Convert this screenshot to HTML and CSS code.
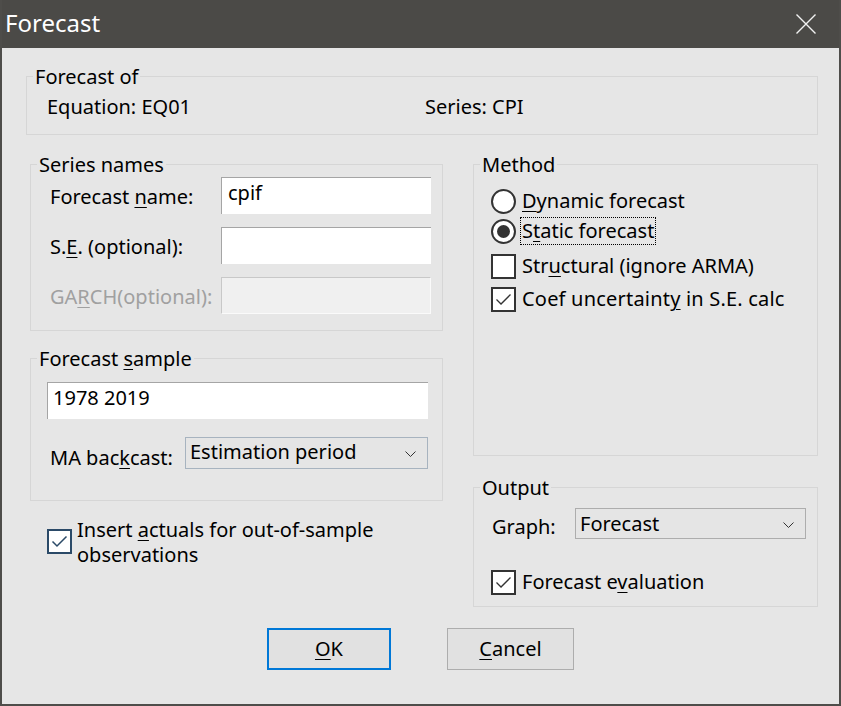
FILE: index.html
```html
<!DOCTYPE html>
<html>
<head>
<meta charset="utf-8">
<link rel="stylesheet" href="styles.css">
</head>
<body>
<div class="window">
  <div class="titlebar">
    <span class="title">Forecast</span>
    <svg class="close" width="20" height="20" viewBox="0 0 20 20"><path d="M0.5 0.5 L19.5 19.5 M19.5 0.5 L0.5 19.5" stroke="#f2f2f2" stroke-width="1.4" fill="none"/></svg>
  </div>
  <div class="client">
    <fieldset class="group g-of">
      <legend>Forecast of</legend>
      <div class="gbody of-row"><span class="of-eq">Equation: EQ01</span><span>Series: CPI</span></div>
    </fieldset>

    <div class="cols">
      <div class="col-left">
        <fieldset class="group g-names">
          <legend>Series names</legend>
          <div class="gbody name-grid">
            <span class="lbl">Forecast <u>n</u>ame:</span><div class="edit">cpif</div>
            <span class="lbl">S.<u>E</u>. (optional):</span><div class="edit"></div>
            <span class="lbl disabled">GA<u>R</u>CH(optional):</span><div class="edit edit-disabled"></div>
          </div>
        </fieldset>

        <fieldset class="group g-sample">
          <legend>Forecast <u>s</u>ample</legend>
          <div class="gbody">
            <div class="edit edit-sample">1978 2019</div>
            <div class="combo-row">
              <span class="lbl combo-lbl">MA bac<u>k</u>cast:</span>
              <div class="combo combo-ma"><span>Estimation period</span><svg class="chev" width="11" height="6" viewBox="0 0 11 6"><path d="M0.5 0.5 L5.5 5.5 L10.5 0.5" stroke="#333" stroke-width="1" fill="none"/></svg></div>
            </div>
          </div>
        </fieldset>

        <div class="check-row insert">
          <span class="box box-blue"><svg width="21" height="21" viewBox="0 0 21 21"><path d="M3.5 10.5 L8 15 L17.5 5.5" stroke="#2b4a68" stroke-width="1.5" fill="none"/></svg></span>
          <span class="insert-text">Insert <u>a</u>ctuals for out-of-sample<br>observations</span>
        </div>
      </div>

      <div class="col-right">
        <fieldset class="group g-method">
          <legend>Method</legend>
          <div class="gbody">
            <div class="opt r1"><span class="radio"></span><span class="opt-text"><u>D</u>ynamic forecast</span></div>
            <div class="opt r2"><span class="radio on"><span class="dot"></span></span><span class="opt-text focus">S<u>t</u>atic forecast</span></div>
            <div class="opt r3"><span class="box"></span><span class="opt-text">Str<u>u</u>ctural (ignore ARMA)</span></div>
            <div class="opt r4"><span class="box"><svg width="21" height="21" viewBox="0 0 21 21"><path d="M3.5 10.5 L8 15 L17.5 5.5" stroke="#333" stroke-width="1.3" fill="none"/></svg></span><span class="opt-text">Coef uncertaint<u>y</u> in S.E. calc</span></div>
          </div>
        </fieldset>

        <fieldset class="group g-output">
          <legend>Output</legend>
          <div class="gbody">
            <div class="combo-row graph-row">
              <span class="lbl combo-lbl graph-lbl">Graph:</span>
              <div class="combo combo-graph"><span>Forecast</span><svg class="chev" width="11" height="6" viewBox="0 0 11 6"><path d="M0.5 0.5 L5.5 5.5 L10.5 0.5" stroke="#333" stroke-width="1" fill="none"/></svg></div>
            </div>
            <div class="opt eval"><span class="box"><svg width="21" height="21" viewBox="0 0 21 21"><path d="M3.5 10.5 L8 15 L17.5 5.5" stroke="#333" stroke-width="1.3" fill="none"/></svg></span><span class="opt-text">Forecast e<u>v</u>aluation</span></div>
          </div>
        </fieldset>
      </div>
    </div>

    <div class="buttons">
      <div class="btn btn-default"><u>O</u>K</div>
      <div class="btn btn-cancel"><u>C</u>ancel</div>
    </div>
  </div>
</div>
</body>
</html>
```

FILE: styles.css
```css
* { box-sizing: border-box; }
html, body { margin: 0; padding: 0; }
body {
  width: 841px;
  height: 706px;
  overflow: hidden;
  font-family: "Noto Sans", "Open Sans", sans-serif;
  font-size: 20px;
  line-height: 26px;
  color: #000;
  background: #4e4d4a;
}
u { text-decoration-thickness: 1px; text-underline-offset: 3px; }

.window {
  width: 841px;
  height: 706px;
  border: 2px solid #4e4d4a;
  border-top: 0;
  display: flex;
  flex-direction: column;
}
.titlebar {
  height: 48px;
  flex: none;
  background: #4b4a47;
  display: flex;
  align-items: center;
  justify-content: space-between;
  padding: 0 23px 2px 3px;
}
.title {
  color: #fff;
  font-size: 24px;
  line-height: 30px;
}
.close { display: block; margin-top: 1px; }

.client {
  flex: 1;
  background: #e6e6e6;
  display: flex;
  flex-direction: column;
}

.group {
  margin: 0;
  padding: 0;
  border: 1px solid #d6d6d6;
  min-width: 0;
}
.group legend {
  padding: 2px 2px 0;
  margin-left: 6px;
  line-height: 24px;
}

/* Forecast of */
.g-of {
  margin: 15px 0 0 24px;
  width: 792px;
}
.g-of .gbody { padding: 5px 0 14px 20px; }
.of-row { display: flex; }
.of-eq { width: 378px; }

/* columns */
.cols {
  display: flex;
  gap: 30px;
  margin: 16px 0 0 28px;
}
.col-left { width: 413px; display: flex; flex-direction: column; }
.col-right { width: 345px; display: flex; flex-direction: column; }

/* Series names */
.name-grid {
  display: grid;
  grid-template-columns: 171px 210px;
  row-gap: 13px;
  align-items: start;
  padding: 0 11px 16px 19px;
}
.lbl { white-space: nowrap; margin-top: 7px; }
.lbl.disabled { color: #a0a0a0; }

.edit {
  height: 37px;
  background: #fff;
  border-top: 1px solid #a5a5a5;
  border-left: 1px solid #a5a5a5;
  padding: 2px 6px 0;
}
.edit-disabled {
  background: #f0f0f0;
  border-top-color: #c8c8c8;
  border-left-color: #c8c8c8;
  border-right: 1px solid #fafafa;
  border-bottom: 1px solid #fafafa;
}

/* Forecast sample */
.g-sample { margin-top: 14px; }
.g-sample .gbody { padding: 11px 14px 29px 16px; }
.edit-sample { width: 381px; padding-left: 5px; padding-top: 2px; }
.combo-row {
  display: flex;
  align-items: flex-start;
  margin-top: 18px;
}
.combo-lbl { width: 138px; padding-left: 3px; margin-top: 8px; }
.combo {
  height: 32px;
  background: #e5e5e5;
  border: 1px solid #adadad;
  display: flex;
  align-items: flex-start;
  justify-content: space-between;
  padding: 1px 11px 0 4px;
}
.combo-ma { width: 243px; border-color: #a7b3bf; }
.chev { display: block; margin-top: 12px; }

/* Insert actuals */
.check-row { display: flex; align-items: flex-start; }
.insert { margin: 16px 0 0 17px; }
.insert .box { margin-top: 12px; }
.insert-text { margin-left: 5px; line-height: 25px; }

.box {
  width: 25px;
  height: 25px;
  flex: none;
  border: 2px solid #333;
  background: #fff;
  display: flex;
  align-items: center;
  justify-content: center;
}
.box-blue { border-color: #2b4a68; }
.box svg { display: block; }

/* Method */
.g-method { height: 305px; }
.g-method .gbody { padding: 9px 0 0 17px; }
.opt {
  display: flex;
  align-items: center;
  height: 30px;
}
.r3 { margin-top: 5px; }
.r4 { margin-top: 3px; }
.radio {
  width: 25px;
  height: 25px;
  flex: none;
  border: 2px solid #333;
  border-radius: 50%;
  background: #fff;
  display: flex;
  align-items: center;
  justify-content: center;
}
.dot { width: 13px; height: 13px; border-radius: 50%; background: #333; }
.opt-text { margin-left: 5px; padding: 1px 1px 1px; line-height: 24px; white-space: nowrap; }
.r4 .opt-text { letter-spacing: 0.2px; }
.focus { outline: 1px dotted #000; outline-offset: 0; }

/* Output */
.g-output { margin-top: 18px; }
.g-output .gbody { padding: 8px 11px 9px 17px; }
.graph-row { margin-top: 0; }
.graph-lbl { width: 84px; padding-left: 1px; margin-top: 6px; }
.combo-graph { width: 231px; height: 31px; padding-top: 2px; }
.combo-graph .chev { margin-top: 11px; }
.eval { margin-top: 27px; }

/* Buttons */
.buttons {
  display: flex;
  justify-content: center;
  gap: 56px;
  margin-top: 21px;
}
.btn {
  height: 42px;
  background: #e1e1e1;
  display: flex;
  align-items: center;
  justify-content: center;
}
.btn-default { width: 124px; border: 2px solid #0078d7; }
.btn-cancel { width: 127px; border: 1px solid #adadad; }
```
